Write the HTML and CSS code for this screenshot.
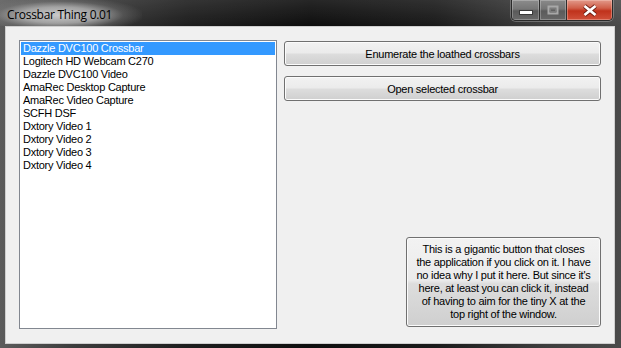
FILE: index.html
```html
<!DOCTYPE html>
<html>
<head>
  <meta charset="utf-8">
  <title>Crossbar Thing 0.01</title>
  <link rel="stylesheet" href="styles.css">
</head>
<body>
  <div class="window">
    <div class="titlebar">
      <span class="title">Crossbar Thing 0.01</span>
      <div class="caption">
        <span class="cap min">
          <svg width="14" height="5" viewBox="0 0 14 5"><rect x="0.5" y="0.5" width="13" height="4" fill="#fff" stroke="#3a3a3a" stroke-width="1"/></svg>
        </span>
        <span class="cap max">
          <svg width="12" height="10" viewBox="0 0 12 10"><rect x="1.5" y="1.5" width="9" height="7" fill="none" stroke="#a8a8a8" stroke-width="2"/><rect x="3.5" y="3.5" width="5" height="3" fill="none" stroke="#7c7c7c" stroke-width="1"/></svg>
        </span>
        <span class="cap close">
          <svg width="16" height="13" viewBox="0 0 16 13"><path d="M2.5 2 L13.5 11 M13.5 2 L2.5 11" stroke="#6a1a10" stroke-width="4.4"/><path d="M2.5 2 L13.5 11 M13.5 2 L2.5 11" stroke="#fff" stroke-width="2.8"/></svg>
        </span>
      </div>
    </div>

    <div class="client">
      <ul class="listbox">
        <li class="selected">Dazzle DVC100 Crossbar</li>
        <li>Logitech HD Webcam C270</li>
        <li>Dazzle DVC100 Video</li>
        <li>AmaRec Desktop Capture</li>
        <li>AmaRec Video Capture</li>
        <li>SCFH DSF</li>
        <li>Dxtory Video 1</li>
        <li>Dxtory Video 2</li>
        <li>Dxtory Video 3</li>
        <li>Dxtory Video 4</li>
      </ul>

      <div class="actions">
        <button class="btn">Enumerate the loathed crossbars</button>
        <button class="btn second">Open selected crossbar</button>
        <button class="btn big">This is a gigantic button that closes<br>the application if you click on it. I have<br>no idea why I put it here. But since it's<br>here, at least you can click it, instead<br>of having to aim for the tiny X at the<br>top right of the window.</button>
      </div>
    </div>
  </div>
</body>
</html>
```

FILE: styles.css
```css
html, body {
  margin: 0;
  padding: 0;
  background-color: #1c1c1c;
}
.window {
  width: 621px;
  height: 348px;
  box-sizing: border-box;
  padding: 0 6px 4px 5px;
  background: linear-gradient(to right, #5c5c5c 0%, #3c3c3c 12%, #1e1e1e 30%, #0e0e0e 50%, #1a1a1a 70%, #3e3e3e 88%, #4a4a4a 100%);
  display: flex;
  flex-direction: column;
  font-family: "Liberation Sans", Arial, sans-serif;
  font-size: 11px;
  letter-spacing: -0.25px;
}
.titlebar {
  height: 26px;
  display: flex;
  align-items: flex-start;
  justify-content: space-between;
  background: linear-gradient(to bottom, rgba(255,255,255,0.10), rgba(255,255,255,0));
  margin: 0 -6px 0 -5px;
}
.title {
  height: 26px;
  padding: 6px 30px 0 7px;
  box-sizing: border-box;
  font-family: "Open Sans", "Noto Sans", sans-serif;
  font-size: 12px;
  line-height: 18px;
  color: #000;
  letter-spacing: -0.3px;
  background: radial-gradient(ellipse 60% 70% at 42% 58%, rgba(215,215,215,0.92) 0%, rgba(190,190,190,0.75) 45%, rgba(130,130,130,0.35) 75%, rgba(90,90,90,0) 100%);
}
.caption {
  display: flex;
  height: 20px;
  margin-right: 8px;
  border: 1px solid #2a2a2a;
  border-top: none;
  border-radius: 0 0 5px 5px;
  overflow: hidden;
  box-shadow: 0 0 0 1px rgba(200,200,200,0.35);
}
.cap {
  display: flex;
  align-items: center;
  justify-content: center;
  height: 20px;
  box-sizing: border-box;
  border-right: 1px solid #2e2e2e;
}
.cap.min {
  width: 28px;
  background: linear-gradient(to bottom, #8c8c8c 0%, #767676 45%, #5a5a5a 55%, #6a6a6a 100%);
  box-shadow: inset 0 0 0 1px rgba(255,255,255,0.25);
}
.cap.min svg {
  margin-top: 4px;
}
.cap.max {
  width: 27px;
  background: linear-gradient(to bottom, #8a8a8a 0%, #747474 45%, #5a5a5a 55%, #686868 100%);
  box-shadow: inset 0 0 0 1px rgba(255,255,255,0.25);
}
.cap.close {
  width: 45px;
  border-right: none;
  background: linear-gradient(to bottom, #e2998a 0%, #d0604a 40%, #c0321c 55%, #d0503a 100%);
  box-shadow: inset 0 0 0 1px rgba(255,220,210,0.35);
}
.client {
  flex: 1;
  display: flex;
  background-color: #f0f0f0;
  border: 1px solid #cfcfcf;
  padding: 13px 13px 14px 13px;
}
.listbox {
  list-style: none;
  margin: 0;
  padding: 1px;
  width: 258px;
  height: 289px;
  box-sizing: border-box;
  background-color: #fff;
  border: 1px solid #828790;
  color: #000;
}
.listbox li {
  line-height: 13px;
  height: 13px;
  padding-left: 2px;
  white-space: nowrap;
}
.listbox li.selected {
  background-color: #3399ff;
  color: #fff;
}
.actions {
  flex: 1;
  display: flex;
  flex-direction: column;
  margin-left: 7px;
}
.btn {
  font-family: "Liberation Sans", Arial, sans-serif;
  font-size: 11px;
  letter-spacing: -0.25px;
  color: #000;
  height: 25px;
  margin: 1px 0 0 0;
  padding: 0;
  border: 1px solid #707070;
  border-radius: 3px;
  background: linear-gradient(to bottom, #f2f2f2 0%, #ebebeb 48%, #dddddd 52%, #cfcfcf 100%);
  box-shadow: inset 0 0 0 1px #fbfbfb;
}
.btn.second {
  margin-top: 10px;
}
.btn.big {
  align-self: flex-end;
  margin-top: auto;
  margin-bottom: 2px;
  width: 195px;
  height: 90px;
  line-height: 13px;
}
```
